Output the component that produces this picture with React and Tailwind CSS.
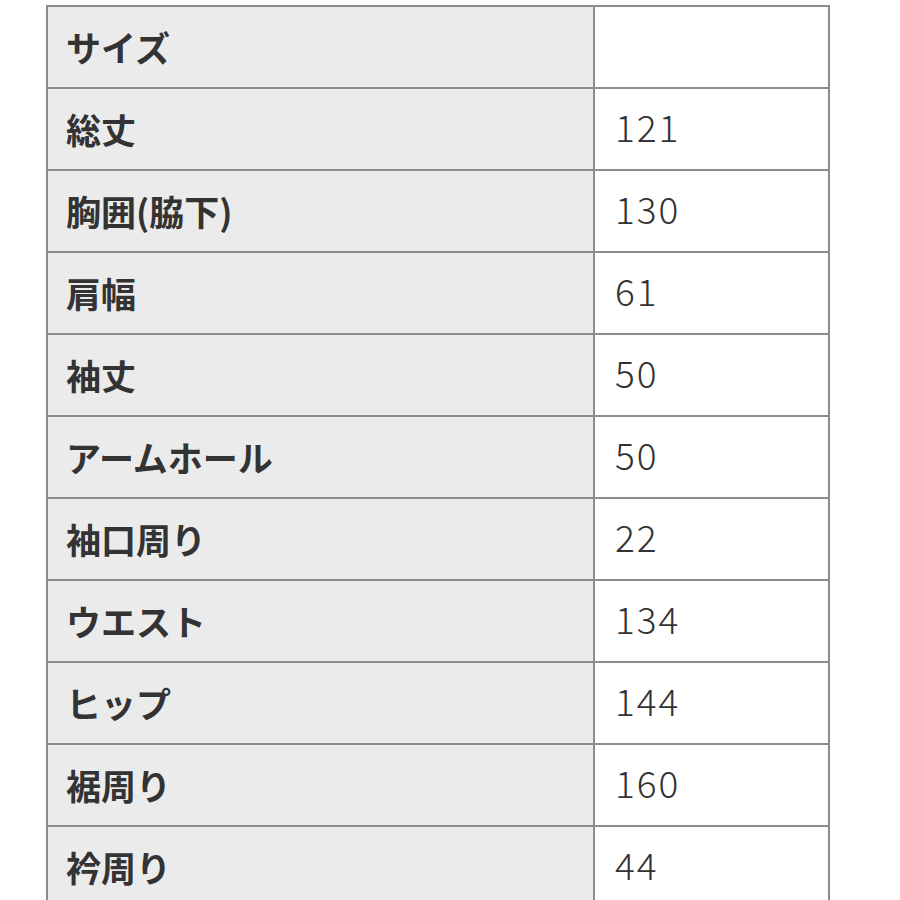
import React from "react";

const rows = [
  ["サイズ", ""],
  ["総丈", "121"],
  ["胸囲(脇下)", "130"],
  ["肩幅", "61"],
  ["袖丈", "50"],
  ["アームホール", "50"],
  ["袖口周り", "22"],
  ["ウエスト", "134"],
  ["ヒップ", "144"],
  ["裾周り", "160"],
  ["衿周り", "44"],
];

const App = () => {
  return (
    <div className="w-[900px] h-[900px] overflow-hidden bg-white pt-[5px] pl-[46px] font-['Noto_Sans_CJK_JP',sans-serif] text-[#333]">
      <table className="w-[784px] border-collapse">
        <tbody>
          {rows.map(([label, value]) => (
            <tr key={label} className="h-[82px]">
              <td className="w-[547px] border-2 border-[#8c8c8c] bg-[#ebebeb] pl-[18px] pb-[2px] text-[35px] font-bold leading-none">
                {label}
              </td>
              <td className="border-2 border-[#8c8c8c] bg-white pl-[20px] pb-[6px] text-[37px] font-light leading-none tracking-[2px]">
                {value}
              </td>
            </tr>
          ))}
        </tbody>
      </table>
    </div>
  );
};

export default App;
